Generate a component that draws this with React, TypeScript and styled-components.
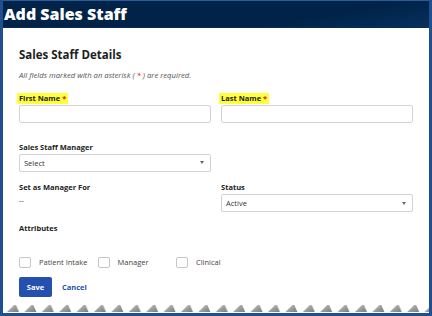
import styled, { createGlobalStyle } from "styled-components";

const GlobalStyle = createGlobalStyle`
  html, body {
    margin: 0;
    padding: 0;
    background: #ffffff;
  }
  body {
    font-family: "Open Sans", "Noto Sans", Arial, sans-serif;
    color: #222;
  }
  * {
    box-sizing: border-box;
  }
`;

const Frame = styled.div`
  width: 432px;
  height: 316px;
  display: flex;
  flex-direction: column;
  border: 3px solid #1f4f8e;
  border-top: none;
  background: #ffffff;
  overflow: hidden;
`;

const Header = styled.div`
  height: 28px;
  flex: none;
  display: flex;
  align-items: center;
  margin: 0 0 0 -3px;
  padding: 0 0 1px 4px;
  background: linear-gradient(170deg, #002347 0%, #002347 70%, #07305e 100%);
  border-top: 1px solid #2b5d9c;
  border-bottom: 1px solid #0a2d57;
`;

const Title = styled.h1`
  margin: 0;
  color: #ffffff;
  font-size: 16px;
  font-weight: 800;
`;

const Body = styled.div`
  flex: 1;
  display: flex;
  flex-direction: column;
  padding: 19px 16px 0 16px;
`;

const SectionTitle = styled.h2`
  margin: 0;
  font-size: 11.5px;
  font-weight: 700;
  color: #1d1d1d;
  line-height: 16px;
`;

const Note = styled.p`
  margin: 7px 0 0 0;
  font-size: 7.7px;
  font-style: italic;
  color: #555;
  line-height: 10px;
`;

const Red = styled.span`
  color: #e02020;
`;

const Grid = styled.div`
  display: grid;
  grid-template-columns: 192px 192px;
  column-gap: 10px;
  row-gap: 10.5px;
  margin-top: 13px;
`;

const Field = styled.div<{ $spaced?: boolean }>`
  display: flex;
  flex-direction: column;
  align-items: flex-start;
  margin-bottom: ${({ $spaced }) => ($spaced ? "8px" : "0")};
`;

const Label = styled.label<{ $highlight?: boolean }>`
  font-size: 7.5px;
  font-weight: 700;
  color: #222;
  line-height: 11px;
  padding: 0 2px;
  margin: 0 0 1px -2px;
  background: ${({ $highlight }) => ($highlight ? "#ffff3c" : "transparent")};
`;

const Input = styled.div`
  width: 100%;
  height: 18px;
  border: 1px solid #d4d4d4;
  border-radius: 2px;
  background: #fff;
`;

const Select = styled.div`
  width: 100%;
  height: 18px;
  border: 1px solid #d4d4d4;
  border-radius: 2px;
  background: #fff;
  display: flex;
  align-items: center;
  justify-content: space-between;
  padding: 0 6px 0 4px;
  font-size: 7.5px;
  color: #333;
`;

const Caret = styled.span`
  width: 0;
  height: 0;
  border-left: 2.5px solid transparent;
  border-right: 2.5px solid transparent;
  border-top: 3px solid #666;
`;

const Value = styled.div`
  font-size: 7.5px;
  color: #333;
  line-height: 11px;
  margin-top: 1px;
`;

const Checks = styled.div`
  display: flex;
  margin-top: 22px;
`;

const CheckItem = styled.label`
  width: 78.5px;
  display: flex;
  align-items: center;
  gap: 8px;
  font-size: 7.5px;
  color: #444;
`;

const Box = styled.span`
  width: 12px;
  height: 11px;
  border: 1px solid #c6c6c6;
  border-radius: 2px;
  background: #fff;
`;

const Actions = styled.div`
  display: flex;
  align-items: center;
  gap: 10px;
  margin-top: 9px;
`;

const SaveButton = styled.button`
  width: 33px;
  height: 20px;
  border: none;
  border-radius: 2px;
  background: #2550b0;
  color: #fff;
  font-family: inherit;
  font-size: 7.5px;
  font-weight: 700;
  padding: 0;
`;

const CancelLink = styled.a`
  font-size: 7.5px;
  font-weight: 700;
  color: #2550b0;
`;

const Torn = styled.svg`
  display: block;
  margin: auto -16px 0 -16px;
  width: calc(100% + 32px);
  height: 10px;
  flex: none;
`;

const TornEdge = () => (
  <Torn viewBox="0 0 426 10" preserveAspectRatio="none">
    <defs>
      <linearGradient id="tooth" x1="0" y1="0" x2="1" y2="1">
        <stop offset="0" stopColor="#c4c4c4" />
        <stop offset="1" stopColor="#7a7a7a" />
      </linearGradient>
      <pattern id="teeth" x="4" y="0" width="17.4" height="10" patternUnits="userSpaceOnUse">
        <polygon points="0,9 7,2 9,2 12,9" fill="url(#tooth)" />
      </pattern>
    </defs>
    <rect x="0" y="0" width="426" height="10" fill="url(#teeth)" />
  </Torn>
);

export default function App() {
  return (
    <>
      <GlobalStyle />
      <Frame>
        <Header>
          <Title>Add Sales Staff</Title>
        </Header>
        <Body>
          <SectionTitle>Sales Staff Details</SectionTitle>
          <Note>
            All fields marked with an asterisk ( <Red>*</Red> ) are required.
          </Note>
          <Grid>
            <Field $spaced>
              <Label $highlight>
                First Name <Red>*</Red>
              </Label>
              <Input />
            </Field>
            <Field $spaced>
              <Label $highlight>
                Last Name <Red>*</Red>
              </Label>
              <Input />
            </Field>
            <Field>
              <Label>Sales Staff Manager</Label>
              <Select>
                Select
                <Caret />
              </Select>
            </Field>
            <div />
            <Field>
              <Label>Set as Manager For</Label>
              <Value>--</Value>
            </Field>
            <Field>
              <Label>Status</Label>
              <Select>
                Active
                <Caret />
              </Select>
            </Field>
            <Field>
              <Label>Attributes</Label>
            </Field>
          </Grid>
          <Checks>
            <CheckItem>
              <Box />
              Patient Intake
            </CheckItem>
            <CheckItem>
              <Box />
              Manager
            </CheckItem>
            <CheckItem>
              <Box />
              Clinical
            </CheckItem>
          </Checks>
          <Actions>
            <SaveButton>Save</SaveButton>
            <CancelLink>Cancel</CancelLink>
          </Actions>
          <TornEdge />
        </Body>
      </Frame>
    </>
  );
}
